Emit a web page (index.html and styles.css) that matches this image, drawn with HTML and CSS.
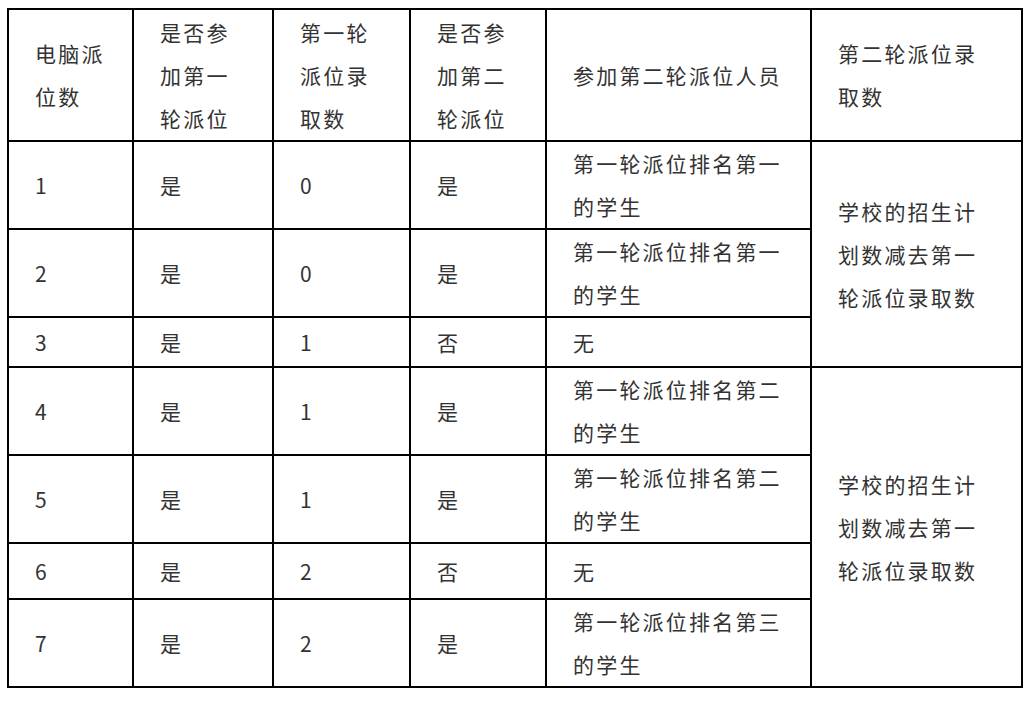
FILE: index.html
```html
<!DOCTYPE html>
<html lang="zh-CN">
<head>
<meta charset="utf-8">
<title>派位表</title>
<link rel="stylesheet" href="styles.css">
</head>
<body>
<table class="grid">
  <tr class="row-head">
    <td class="c1">电脑派位数</td>
    <td class="c2">是否参加第一轮派位</td>
    <td class="c3">第一轮派位录取数</td>
    <td class="c4">是否参加第二轮派位</td>
    <td class="c5">参加第二轮派位人员</td>
    <td class="c6">第二轮派位录取数</td>
  </tr>
  <tr class="row-tall">
    <td>1</td><td>是</td><td>0</td><td>是</td><td>第一轮派位排名第一的学生</td>
    <td rowspan="3">学校的招生计划数减去第一轮派位录取数</td>
  </tr>
  <tr class="row-tall">
    <td>2</td><td>是</td><td>0</td><td>是</td><td>第一轮派位排名第一的学生</td>
  </tr>
  <tr class="row-short">
    <td>3</td><td>是</td><td>1</td><td>否</td><td>无</td>
  </tr>
  <tr class="row-tall">
    <td>4</td><td>是</td><td>1</td><td>是</td><td>第一轮派位排名第二的学生</td>
    <td rowspan="4">学校的招生计划数减去第一轮派位录取数</td>
  </tr>
  <tr class="row-tall">
    <td>5</td><td>是</td><td>1</td><td>是</td><td>第一轮派位排名第二的学生</td>
  </tr>
  <tr class="row-mid">
    <td>6</td><td>是</td><td>2</td><td>否</td><td>无</td>
  </tr>
  <tr class="row-tall">
    <td>7</td><td>是</td><td>2</td><td>是</td><td>第一轮派位排名第三的学生</td>
  </tr>
</table>
</body>
</html>
```
FILE: styles.css
```css
html, body {
  margin: 0;
  padding: 0;
  background: #ffffff;
}

body {
  padding: 8px 0 0 7px;
  font-family: "Noto Sans CJK SC", "Noto Sans", sans-serif;
  color: #333333;
}

.grid {
  border-collapse: separate;
  border-spacing: 0;
  table-layout: fixed;
  width: 1016px;
  border-top: 2px solid #000;
  border-left: 2px solid #000;
}

.grid td {
  box-sizing: border-box;
  border-right: 2px solid #000;
  border-bottom: 2px solid #000;
  padding: 0 24px 0 26px;
  font-size: 21px;
  letter-spacing: 2.2px;
  line-height: 43px;
  vertical-align: middle;
  text-align: left;
  word-break: break-all;
}

.c1 { width: 125px; }
.c2 { width: 140px; }
.c3 { width: 137px; }
.c4 { width: 136px; }
.c5 { width: 265px; }
.c6 { width: 211px; }

.row-head { height: 132px; }
.row-tall { height: 88px; }
.row-short { height: 50px; }
.row-mid { height: 56px; }
```
